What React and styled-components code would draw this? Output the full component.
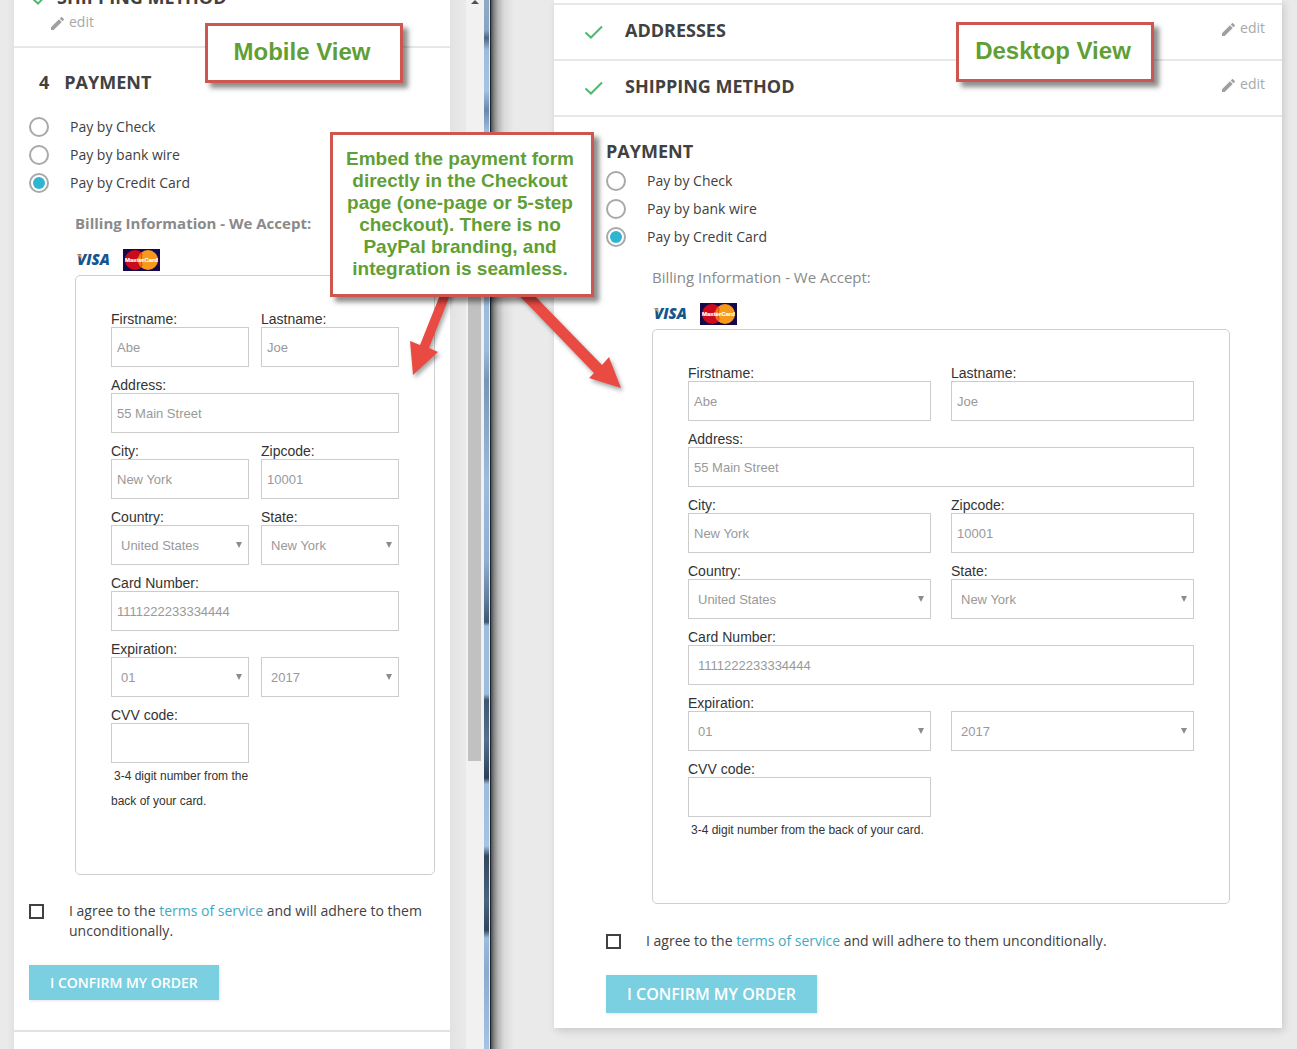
import React, { useId } from 'react';
import styled, { createGlobalStyle, css } from 'styled-components';

const sans = '"Open Sans", "Noto Sans", sans-serif';
const arial = '"Liberation Sans", Arial, sans-serif';

const GlobalStyle = createGlobalStyle`
    *, *::before, *::after {
        box-sizing: border-box;
    }

    body {
        margin: 0;
        background: #eaeaea;
        font-family: ${sans};
        font-size: 14px;
        line-height: 20px;
        color: #414141;
    }
`;

const Board = styled.main`
    display: grid;
    grid-template-columns: minmax(0, 491fr) minmax(0, 806fr);
    min-height: 100vh;
    overflow: hidden;
`;

/* windows */

const MobileWindow = styled.section`
    position: relative;
    display: flex;
    min-width: 0;
    overflow: hidden;
`;

const MobilePage = styled.div`
    flex: 1;
    min-width: 0;
    display: flex;
    flex-direction: column;
    margin-top: -29px;
    padding: 0 16px 0 14px;
    background: linear-gradient(90deg, #eaeaea 0, #e9e9e9 8px, #e2e2e2 14px, #e2e2e2 calc(100% - 16px), #eaeaea 100%);
`;

const ScrollBar = styled.div`
    flex: none;
    width: 18px;
    padding-left: 2px;
    padding-right: 3px;
    background: #f1f1f1;
`;

const ScrollArrow = styled.div`
    width: 0;
    margin: 0 auto 131px;
    border: 4px solid transparent;
    border-top: 0;
    border-bottom-color: #505050;
`;

const ScrollThumb = styled.div`
    height: 626px;
    background: #c1c1c1;
`;

const GlassEdge = styled.div`
    flex: none;
    width: 7px;
    border-right: 1px solid #1c242e;
    box-shadow: inset -1px 0 #e4eef6;
    background: linear-gradient(180deg,
        #8ea9c4 0, #86a4c4 30px, #4d6683 38px, #9bbcdd 50px, #a3c4e4 90px, #6788ab 110px, #9bbcdd 130px,
        #9bbcdd 350px, #7696b8 380px, #9bbcdd 480px, #8fb0d3 560px, #5f7c9c 600px, #3f556f 622px, #9bbcdd 626px,
        #9bbcdd 694px, #3f5670 700px, #54708f 740px, #2c3f55 778px, #9bbcdd 784px, #a3c4e4 846px, #33475d 856px,
        #4b6480 900px, #31455b 930px, #9bbcdd 938px, #8aabd0 970px, #a3c4e4 100%);
`;

const DesktopWindow = styled.section`
    position: relative;
    min-width: 0;
    padding: 0 15px 20px 63px;
    background: linear-gradient(90deg, #4e4e4e 0, #858585 3px, #b4b4b4 7px, #dadada 13px, #e9e9e9 22px, #eaeaea 24px);
`;

const Card = styled.div`
    background: #fff;

    ${props => props.$grow && css`
        flex: 1;
    `}

    ${props => props.$raised && css`
        box-shadow: 2px 3px 8px rgba(0, 0, 0, 0.14);
    `}
`;

/* checkout steps */

const StepHead = styled.header`
    display: flex;
    align-items: flex-start;
    flex-wrap: ${props => props.$mobile ? 'wrap' : 'nowrap'};
    padding: ${props => props.$mobile ? '14px 15px 14px 17px' : '13px 17px 17px 30px'};
    row-gap: 3px;
    border-bottom: 2px solid #e7e7e7;
`;

const StepEnd = styled.div`
    height: 5px;
    border-bottom: 2px solid #e7e7e7;
`;

const StepTitle = styled.h2`
    flex: 1;
    margin: 0;
    font-size: 18px;
    font-weight: 700;
    line-height: 24px;
    color: #414141;
`;

const CheckMark = styled.svg`
    flex: none;
    width: 20px;
    height: 14px;
    margin: ${props => props.$mobile ? '6px 6px 0 0' : '7px 21px 0 0'};
    fill: none;
    stroke: #4cbb6c;
    stroke-width: 2;
`;

const EditLink = styled.a`
    display: flex;
    align-items: center;
    gap: 5px;
    color: #a8a8a8;
    text-decoration: none;

    ${props => props.$mobile && css`
        flex-basis: 100%;
        padding-left: 20px;
    `}
`;

const Pencil = styled.svg`
    width: 13px;
    height: 13px;
    margin-top: 2px;
    fill: #a0a0a0;
`;

const Payment = styled.form`
    padding: ${props => props.$mobile ? '22px 15px 30px' : '22px 52px 15px'};

    ${props => props.$mobile && css`
        border-bottom: 2px solid #e2e2e2;
    `}
`;

const PaymentTitle = styled(StepTitle)`
    display: flex;
    gap: 15px;
    margin-bottom: ${props => props.$mobile ? '19px' : '4px'};
    padding-left: ${props => props.$mobile ? '10px' : '0'};
`;

const Option = styled.label`
    display: flex;
    align-items: center;
    gap: 21px;
    height: 28px;
`;

const Radio = styled.input`
    appearance: none;
    width: 20px;
    height: 20px;
    margin: 0;
    padding: 2px;
    border: 2px solid #a9a9a9;
    border-radius: 50%;

    &:checked {
        background: #2fb5d2 content-box;
    }
`;

const Billing = styled.div`
    padding-left: 46px;
`;

const BillingTitle = styled.h3`
    margin: 14px 0;
    font-size: 15px;
    font-weight: ${props => props.$mobile ? 700 : 400};
    line-height: 24px;
    color: #8a8a8a;
`;

const Brands = styled.div`
    display: flex;
    align-items: center;
    gap: 12px;
    margin-bottom: 4px;
`;

const Fields = styled.div`
    display: grid;
    grid-template-columns: 1fr 1fr;
    gap: 10px ${props => props.$mobile ? '12px' : '20px'};
    padding: 35px 35px 60px;
    border: 1px solid #cfcfcf;
    border-radius: 5px;
    font-family: ${arial};
`;

const Field = styled.div`
    min-width: 0;
    display: flex;
    flex-direction: column;
    justify-content: flex-end;
    grid-column: ${props => props.$wide ? '1 / -1' : 'auto'};
`;

const FieldLabel = styled.label`
    font-size: 14px;
    line-height: 16px;
    color: #333;
`;

const control = css`
    display: block;
    width: 100%;
    height: 40px;
    border: 1px solid #ccc;
    border-radius: 0;
    background: #fff;
    font-family: ${arial};
    font-size: 13px;
    color: #999;
`;

const TextInput = styled.input`
    ${control}
    padding: 0 ${props => props.$inset ? '9px' : '5px'};
`;

const SelectBox = styled.div`
    position: relative;

    &::after {
        content: "";
        position: absolute;
        top: 17px;
        right: 7px;
        border: 3px solid transparent;
        border-top: 6px solid #8c8c8c;
        border-bottom: 0;
        pointer-events: none;
    }
`;

const Select = styled.select`
    ${control}
    appearance: none;
    padding: 0 16px 0 9px;
`;

const Hint = styled.p`
    margin: 1px 0 0;
    font-size: 12px;
    line-height: 25px;
    text-indent: 3px;
    color: #333;
`;

const Terms = styled.label`
    display: flex;
    gap: 25px;
    margin: ${props => props.$mobile ? '26px 0 24px' : '27px 0 24px'};
`;

const CheckBox = styled.input`
    appearance: none;
    flex: none;
    width: 15px;
    height: 15px;
    margin: 3px 0 0;
    border: 2px solid #414141;
    background: #fff;

    &:checked {
        background: #414141;
    }
`;

const TermsLink = styled.a`
    color: #3fa9c5;
    text-decoration: none;
`;

const Confirm = styled.button`
    display: block;
    height: ${props => props.$mobile ? '35px' : '38px'};
    padding: 0 21px;
    border: 0;
    background: #7acfe1;
    box-shadow: 1px 1px 3px rgba(0, 0, 0, 0.1);
    font-family: ${sans};
    font-size: ${props => props.$mobile ? '14px' : '16px'};
    font-weight: 600;
    color: #fff;
    text-transform: uppercase;
`;

/* annotations laid over both windows */

const Note = styled.aside`
    position: absolute;
    z-index: 2;
    display: flex;
    align-items: center;
    justify-content: center;
    border: 3px solid #cf554f;
    background: #fff;
    box-shadow: 5px 5px 5px rgba(0, 0, 0, 0.45);
    font-family: ${arial};
    font-weight: 700;
    color: #5f9f35;
    text-align: center;
`;

const ViewNote = styled(Note)`
    top: ${props => props.$mobile ? '23px' : '22px'};
    right: ${props => props.$mobile ? '88px' : '143px'};
    width: 198px;
    height: 60px;
    padding: 0 4px 2px 0;
    font-size: 24px;
    line-height: 28px;
`;

const MainNote = styled(Note)`
    top: 132px;
    left: -161px;
    width: 264px;
    height: 165px;
    padding: 0 10px 2px 6px;
    font-size: 19px;
    line-height: 22px;
`;

const Arrows = styled.svg`
    position: absolute;
    z-index: 1;
    top: 290px;
    left: -91px;
    width: 230px;
    height: 110px;
    fill: #e94b43;
    filter: drop-shadow(2px 3px 2px rgba(0, 0, 0, 0.35));
    pointer-events: none;
`;

const Visa = () => (
    <svg width="36" height="22" viewBox="0 0 36 22" role="img" aria-label="Visa">
        <text x="2" y="16" fontFamily="Open Sans" fontSize="15" fontWeight="800" fontStyle="italic" fill="#14568f">VISA</text>
        <path d="M1 5.500h5l.5 4.500Q5 7 1 5.500z" fill="#e0a048" />
    </svg>
);

const MasterCard = () => (
    <svg width="37" height="22" viewBox="0 0 37 22" role="img" aria-label="MasterCard">
        <rect width="37" height="22" fill="#14094a" />
        <circle cx="12" cy="11" r="10" fill="#cc0a1c" />
        <circle cx="25" cy="11" r="10" fill="#f79a1c" />
        <path d="M18.500 3.500v15M16 6h4M15.500 8h4M15.500 14h4M16 16h4" stroke="#e2571c" fill="none" />
        <text x="18.500" y="13" textAnchor="middle" fontFamily="Liberation Sans" fontSize="6" fontWeight="700" fill="#fff" stroke="#fff" strokeWidth="0.200">MasterCard</text>
    </svg>
);

const DoneStep = ({ title, mobile }) => (
    <StepHead $mobile={mobile}>
        <CheckMark $mobile={mobile} viewBox="0 0 20 14" aria-hidden="true">
            <path d="M1.500 7.500l5.500 5L18 1.500" />
        </CheckMark>
        <StepTitle>{title}</StepTitle>
        <EditLink href="#edit" $mobile={mobile}>
            <Pencil viewBox="3 3 18 18" aria-hidden="true">
                <path d="M3 17.250V21h3.750L17.810 9.940l-3.750-3.750L3 17.250zM20.710 7.040a1 1 0 0 0 0-1.410l-2.340-2.340a1 1 0 0 0-1.410 0l-1.830 1.830 3.750 3.750 1.830-1.830z" />
            </Pencil>
            edit
        </EditLink>
    </StepHead>
);

const TextField = ({ label, value, wide, inset, hint }) => {
    const id = useId();
    return (
        <Field $wide={wide}>
            <FieldLabel htmlFor={id}>{label}</FieldLabel>
            <TextInput id={id} type="text" defaultValue={value} $inset={inset} />
            {hint && <Hint>{hint}</Hint>}
        </Field>
    );
};

const SelectField = ({ label, name, value }) => {
    const id = useId();
    return (
        <Field>
            {label && <FieldLabel htmlFor={id}>{label}</FieldLabel>}
            <SelectBox>
                <Select id={id} aria-label={name} defaultValue={value}>
                    <option>{value}</option>
                </Select>
            </SelectBox>
        </Field>
    );
};

const methods = ['Pay by Check', 'Pay by bank wire', 'Pay by Credit Card'];

const PaymentStep = ({ mobile }) => {
    const group = useId();
    return (
        <Payment $mobile={mobile} onSubmit={e => e.preventDefault()}>
            <PaymentTitle $mobile={mobile}>
                {mobile && <span>4</span>}
                <span>PAYMENT</span>
            </PaymentTitle>
            {methods.map(m => (
                <Option key={m}>
                    <Radio type="radio" name={group} defaultChecked={m === 'Pay by Credit Card'} />
                    {m}
                </Option>
            ))}
            <Billing>
                <BillingTitle $mobile={mobile}>Billing Information - We Accept:</BillingTitle>
                <Brands>
                    <Visa />
                    <MasterCard />
                </Brands>
                <Fields $mobile={mobile}>
                    <TextField label="Firstname:" value="Abe" />
                    <TextField label="Lastname:" value="Joe" />
                    <TextField label="Address:" value="55 Main Street" wide />
                    <TextField label="City:" value="New York" />
                    <TextField label="Zipcode:" value="10001" />
                    <SelectField label="Country:" value="United States" />
                    <SelectField label="State:" value="New York" />
                    <TextField label="Card Number:" value="1111222233334444" wide inset={!mobile} />
                    <SelectField label="Expiration:" value="01" />
                    <SelectField name="Expiration year" value="2017" />
                    <TextField label="CVV code:" value="" hint="3-4 digit number from the back of your card." />
                </Fields>
            </Billing>
            <Terms $mobile={mobile}>
                <CheckBox type="checkbox" />
                <span>
                    I agree to the <TermsLink href="#terms">terms of service</TermsLink> and will adhere to them unconditionally.
                </span>
            </Terms>
            <Confirm type="submit" $mobile={mobile}>I confirm my order</Confirm>
        </Payment>
    );
};

const App = () => (
    <>
        <GlobalStyle />
        <Board>
            <MobileWindow>
                <MobilePage>
                    <Card $grow>
                        <DoneStep title="SHIPPING METHOD" mobile />
                        <PaymentStep mobile />
                    </Card>
                </MobilePage>
                <ScrollBar>
                    <ScrollArrow />
                    <ScrollThumb />
                </ScrollBar>
                <GlassEdge />
                <ViewNote $mobile>Mobile View</ViewNote>
            </MobileWindow>
            <DesktopWindow>
                <Card $raised>
                    <StepEnd />
                    <DoneStep title="ADDRESSES" />
                    <DoneStep title="SHIPPING METHOD" />
                    <PaymentStep />
                </Card>
                <ViewNote>Desktop View</ViewNote>
                <MainNote>
                    Embed the payment form directly in the Checkout page (one-page or 5-step checkout). There is no PayPal branding, and integration is seamless.
                </MainNote>
                <Arrows viewBox="400 290 230 110" aria-hidden="true">
                    <path d="M442 290L420 345L410 341L413 375L438 352L429 348L452 290z" />
                    <path d="M514 290L594 373L589 378L621 388L609 357L602 365L529 290z" />
                </Arrows>
            </DesktopWindow>
        </Board>
    </>
);

export default App;
